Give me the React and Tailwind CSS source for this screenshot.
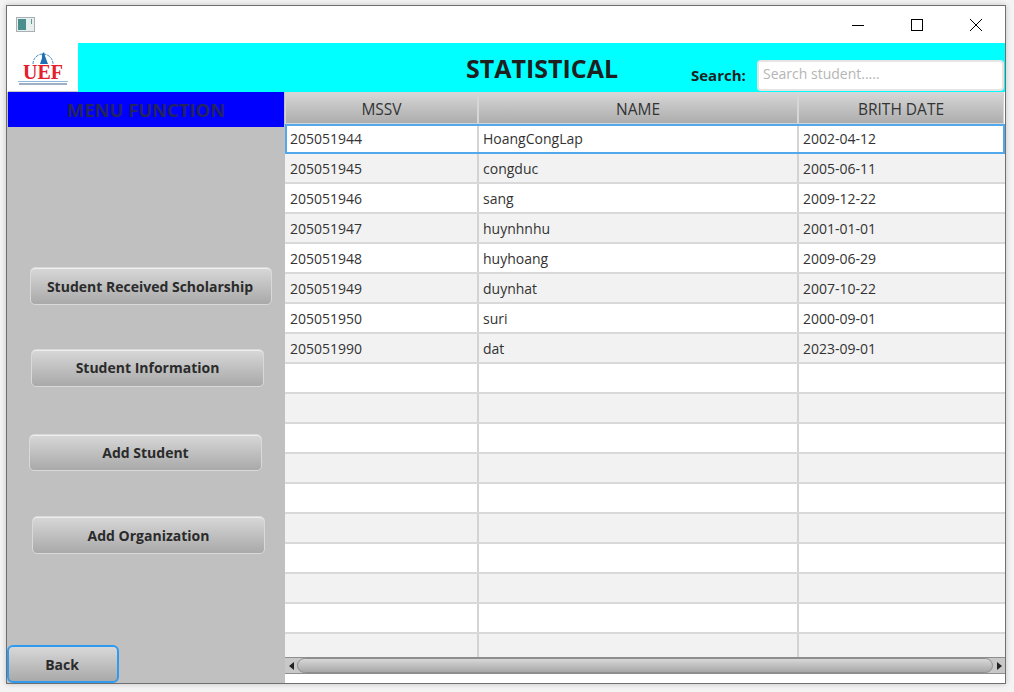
const students = [
  ["205051944", "HoangCongLap", "2002-04-12"],
  ["205051945", "congduc", "2005-06-11"],
  ["205051946", "sang", "2009-12-22"],
  ["205051947", "huynhnhu", "2001-01-01"],
  ["205051948", "huyhoang", "2009-06-29"],
  ["205051949", "duynhat", "2007-10-22"],
  ["205051950", "suri", "2000-09-01"],
  ["205051990", "dat", "2023-09-01"],
  ["", "", ""],
  ["", "", ""],
  ["", "", ""],
  ["", "", ""],
  ["", "", ""],
  ["", "", ""],
  ["", "", ""],
  ["", "", ""],
  ["", "", ""],
  ["", "", ""],
];

function SideButton({ label, className }) {
  return (
    <button className={`h-[38px] rounded-[5px] border border-[#d9d9d9] bg-gradient-to-b from-[#d8d8d8] to-[#a9a9a9] text-[14px] font-bold text-[#2b2b2b] shadow-[inset_0_1px_0_#eeeeee] ${className}`}>
      {label}
    </button>
  );
}

function Logo() {
  return (
    <div className="ml-[1px] w-[70px] shrink-0 bg-white flex flex-col items-center pt-[7px] border-b border-[#c8c8c8]">
      <svg width="22" height="15" viewBox="0 0 22 15">
        <path d="M1 14 A10 10 0 1 1 21 14" fill="none" stroke="#3b8ac4" strokeWidth="1" strokeDasharray="3 1" />
        <path d="M10 4 L12 2 L13 6 L16 14 L8 14 L10 8 Z" fill="#1f6fb2" />
      </svg>
      <div className="text-[20px] leading-[15px] font-bold text-[#e3202c] font-['Liberation_Serif',serif]">UEF</div>
      <div className="mt-[1px] w-[50px] h-[1px] bg-[#8fbbdc]"></div>
      <div className="mt-[1px] w-[48px] h-[2px] bg-[#9fb0c6]"></div>
    </div>
  );
}

function WindowIcon() {
  return (
    <svg width="20" height="16" viewBox="0 0 20 16" className="ml-[9px]">
      <rect x="0.5" y="0.5" width="18" height="14" fill="#e8eeee" stroke="#a8b0b5" />
      <rect x="2" y="2" width="8" height="11" fill="#4a8f8e" />
      <rect x="15" y="2" width="1" height="5" fill="#4f9a9a" />
    </svg>
  );
}

function WindowControls() {
  return (
    <div className="flex items-center text-black">
      <div className="w-[59px] flex justify-center">
        <svg width="12" height="12" viewBox="0 0 12 12"><path d="M0 6.5H12" stroke="#000" strokeWidth="1" /></svg>
      </div>
      <div className="w-[59px] flex justify-center">
        <svg width="12" height="12" viewBox="0 0 12 12"><rect x="0.5" y="0.5" width="11" height="11" fill="none" stroke="#000" /></svg>
      </div>
      <div className="w-[59px] flex justify-center">
        <svg width="12" height="12" viewBox="0 0 12 12"><path d="M0 0L12 12M12 0L0 12" stroke="#000" strokeWidth="1" /></svg>
      </div>
    </div>
  );
}

export default function App() {
  return (
    <div className="w-[1014px] h-[692px] bg-[#f4f4f4] pl-[6px] pt-[5px] overflow-hidden font-['Open_Sans',sans-serif]">
      <div className="w-[1000px] h-[679px] bg-white border border-[#6f6f6f] shadow-[0_0_6px_rgba(0,0,0,0.2)] flex flex-col">
        {/* title bar */}
        <div className="h-[37px] shrink-0 flex items-center justify-between">
          <WindowIcon />
          <WindowControls />
        </div>

        {/* header */}
        <div className="h-[49px] shrink-0 flex">
          <Logo />
          <div className="flex-1 bg-[#00ffff] relative">
            <div className="absolute left-[388px] top-[8px] text-[25px] leading-[34px] font-bold text-[#1f1f1f]">STATISTICAL</div>
            <div className="absolute left-[613px] top-[22px] text-[15px] leading-[20px] font-bold text-[#1f1f1f]">Search:</div>
            <div className="absolute left-[679px] top-[17px] w-[247px] h-[31px] bg-white border-2 border-[#e4e4e4] rounded-[4px] px-[4px] text-[14px] leading-[24px] text-[#b5b5b5]">Search student.....</div>
          </div>
        </div>

        {/* body */}
        <div className="flex-1 flex min-h-0">
          <div className="w-[278px] shrink-0 bg-[#c0c0c0] flex flex-col items-start">
            <div className="w-[276px] ml-[1px] h-[35px] bg-[#0000ff] text-center text-[18.4px] leading-[36px] font-bold text-[#23235f]">MENU FUNCTION</div>
            <SideButton label="Student Received Scholarship" className="ml-[23px] mt-[140px] w-[242px] pr-[2px] pt-[1px]" />
            <SideButton label="Student Information" className="ml-[24px] mt-[44px] w-[233px]" />
            <SideButton label="Add Student" className="ml-[22px] mt-[47px] w-[233px]" />
            <SideButton label="Add Organization" className="ml-[25px] mt-[45px] w-[233px]" />
            <button className="mt-[91px] w-[112px] h-[38px] pr-[2px] rounded-[6px] border-2 border-[#2f9bf0] bg-gradient-to-b from-[#d8d8d8] to-[#a9a9a9] text-[14px] font-bold text-[#2b2b2b]">Back</button>
          </div>

          <div className="flex-1 min-w-0 flex flex-col bg-white">
            <div className="h-[32px] shrink-0 flex text-[15.5px] text-[#333333] text-center leading-[33px]">
              <div className="w-[193px] border border-[#d6d6d6] bg-gradient-to-b from-[#d6d6d6] to-[#adadad]">MSSV</div>
              <div className="w-[320px] border border-[#d6d6d6] bg-gradient-to-b from-[#d6d6d6] to-[#adadad]">NAME</div>
              <div className="w-[206px] border border-[#d6d6d6] bg-gradient-to-b from-[#d6d6d6] to-[#adadad]">BRITH DATE</div>
            </div>

            <div className="h-[533px] shrink-0 overflow-hidden">
              {students.map((row, i) => (
                <div
                  key={i}
                  className={`h-[30px] flex text-[14px] text-[#333333] border-b-2 ${i === 0 ? "border-2 border-[#52a8ea] leading-[26px]" : "border-[#d9d9d9] leading-[30px]"} ${i % 2 === 1 ? "bg-[#f2f2f2]" : "bg-white"}`}
                >
                  <div className={`${i === 0 ? "w-[192px] pl-[3px]" : "w-[194px] pl-[5px]"} border-r-2 border-[#d4d4d4]`}>{row[0]}</div>
                  <div className="w-[320px] pl-[4px] border-r-2 border-[#d4d4d4]">{row[1]}</div>
                  <div className="flex-1 pl-[4px]">{row[2]}</div>
                </div>
              ))}
            </div>

            {/* horizontal scrollbar */}
            <div className="h-[17px] shrink-0 flex items-center bg-[#c8c8c8] border-y border-[#8e8e8e]">
              <div className="w-[12px] flex justify-center">
                <div className="w-0 h-0 border-y-[4px] border-y-transparent border-r-[5px] border-r-[#222222]"></div>
              </div>
              <div className="flex-1 h-[15px] rounded-full border border-[#8e8e8e] bg-gradient-to-b from-[#d8d8d8] to-[#a8a8a8]"></div>
              <div className="w-[12px] flex justify-center">
                <div className="w-0 h-0 border-y-[4px] border-y-transparent border-l-[5px] border-l-[#222222]"></div>
              </div>
            </div>
          </div>
        </div>
      </div>
    </div>
  );
}
